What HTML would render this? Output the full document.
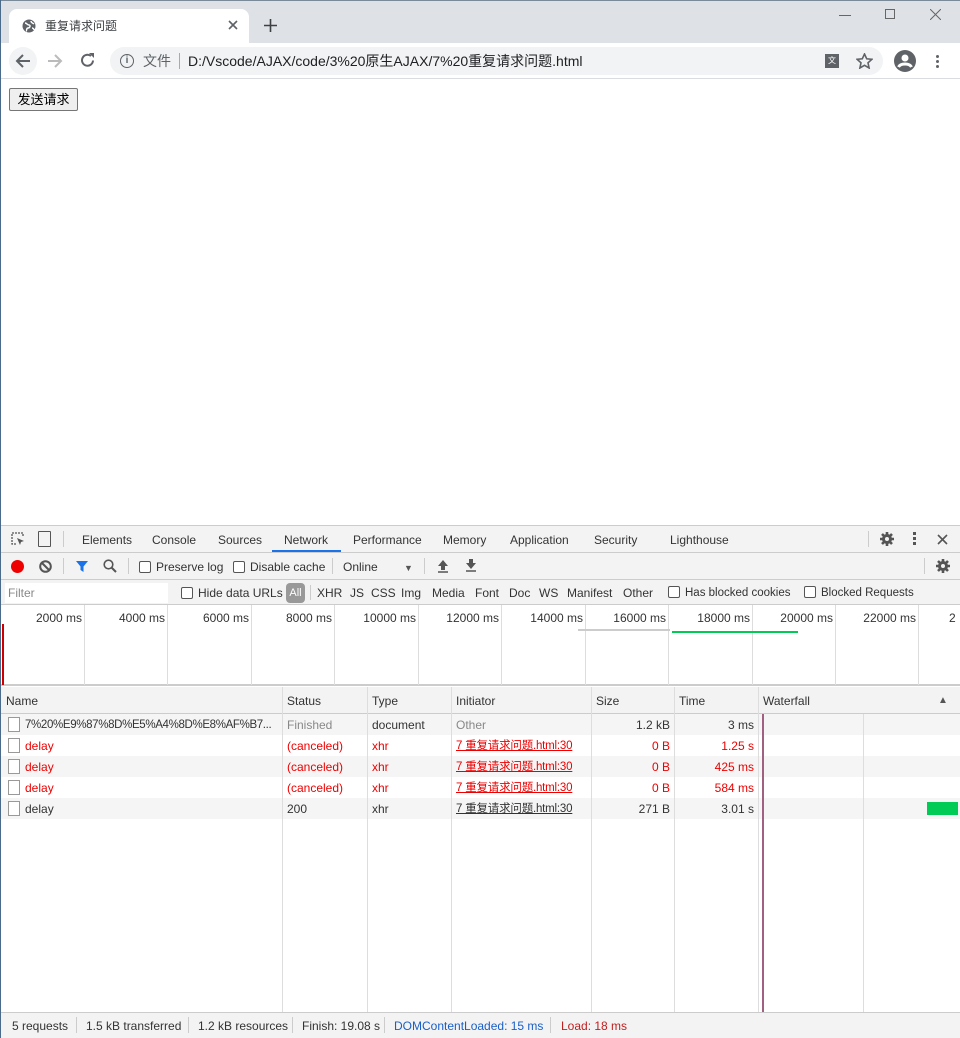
<!DOCTYPE html>
<html><head><meta charset="utf-8"><style>
*{margin:0;padding:0;box-sizing:border-box}
body{width:960px;height:1038px;position:relative;overflow:hidden;background:#fff;font-family:"Liberation Sans","Noto Sans CJK SC",sans-serif;font-size:12px;color:#333}
.a{position:absolute;white-space:nowrap;line-height:14px}
.t{font-size:12px;color:#333}
.red{color:#e00}
.vl{position:absolute;width:1px;background:#ddd}
.cb{display:inline-block;width:12px;height:12px;border:1px solid #555;border-radius:2px;vertical-align:-2px;margin-right:5px;background:#fff}
.ini{font-size:11.5px;text-decoration:underline;letter-spacing:-0.2px}
</style></head><body>
<div class="a" style="left:0;top:0;width:960px;height:1px;background:#7a8a99"></div>
<div class="a" style="left:0;top:0;width:1px;height:1038px;background:#4a6b8a"></div>
<div class="a" style="left:1px;top:1px;width:959px;height:42px;background:#dee1e6"></div>
<div class="a" style="left:9px;top:9px;width:240px;height:34px;background:#fff;border-radius:8px 8px 0 0"></div>
<svg class="a" style="left:22px;top:19px" width="14" height="14" viewBox="0 0 14 14"><circle cx="7" cy="7" r="6.5" fill="#5f6368"/><path d="M3 4c2 0 2 2 4 2s1 3-1 3-1 3-2 3M9 2c0 2 2 2 3 3M10 9c1 0 2 1 2 2" stroke="#fff" stroke-width="1.4" fill="none"/></svg>
<div class="a" style="left:45px;top:19px;font-size:12px;color:#3c4043">重复请求问题</div>
<svg class="a" style="left:228px;top:20px" width="10" height="10" viewBox="0 0 10 10"><path d="M1 1l8 8M9 1l-8 8" stroke="#5f6368" stroke-width="1.6"/></svg>
<svg class="a" style="left:264px;top:19px" width="13" height="13" viewBox="0 0 13 13"><path d="M6.5 0v13M0 6.5h13" stroke="#3c4043" stroke-width="1.6"/></svg>
<div class="a" style="left:839px;top:15px;width:12px;height:1px;background:#666"></div>
<div class="a" style="left:885px;top:9px;width:10px;height:10px;border:1px solid #666"></div>
<svg class="a" style="left:930px;top:9px" width="11" height="11" viewBox="0 0 11 11"><path d="M0 0l11 11M11 0L0 11" stroke="#666" stroke-width="1"/></svg>
<div class="a" style="left:1px;top:43px;width:959px;height:36px;background:#fff;border-bottom:1px solid #dadce0"></div>
<div class="a" style="left:9px;top:47px;width:28px;height:28px;border-radius:14px;background:#f1f3f4"></div>
<svg class="a" style="left:15px;top:53px" width="16" height="16" viewBox="0 0 16 16"><path d="M15 8H2M8 2L2 8l6 6" stroke="#5f6368" stroke-width="2" fill="none"/></svg>
<svg class="a" style="left:47px;top:53px" width="16" height="16" viewBox="0 0 16 16"><path d="M1 8h13M8 2l6 6-6 6" stroke="#bbb" stroke-width="2" fill="none"/></svg>
<svg class="a" style="left:79px;top:52px" width="17" height="17" viewBox="0 0 17 17"><path d="M14 8.5A5.5 5.5 0 1 1 12 4" stroke="#5f6368" stroke-width="2" fill="none"/><path d="M10 1h5v5z" fill="#5f6368"/></svg>
<div class="a" style="left:110px;top:47px;width:773px;height:28px;border-radius:14px;background:#f1f3f4"></div>
<div class="a" style="left:120px;top:54px;width:14px;height:14px;border:1.5px solid #5f6368;border-radius:7px;font-size:10px;text-align:center;line-height:11px;color:#5f6368;font-weight:bold">i</div>
<div class="a" style="left:143px;top:53px;font-size:14px;line-height:16px;color:#5f6368">文件</div>
<div class="a" style="left:179px;top:53px;width:1px;height:16px;background:#aaa"></div>
<div class="a" style="left:188px;top:53px;font-size:14px;line-height:16px;color:#202124">D:/Vscode/AJAX/code/3%20原生AJAX/7%20重复请求问题.html</div>
<div class="a" style="left:825px;top:54px;width:14px;height:14px;border:1px solid #5f6368;background:#5f6368;font-size:8px;color:#fff;text-align:center;line-height:12px">文</div>
<svg class="a" style="left:856px;top:53px" width="17" height="16" viewBox="0 0 17 16"><path d="M8.5 1l2.2 4.8 5.2.5-3.9 3.5 1.1 5.2-4.6-2.7-4.6 2.7 1.1-5.2L1.1 6.3l5.2-.5z" stroke="#5f6368" stroke-width="1.6" fill="none"/></svg>
<svg class="a" style="left:894px;top:50px" width="22" height="22" viewBox="0 0 22 22"><circle cx="11" cy="11" r="11" fill="#5f6368"/><circle cx="11" cy="8" r="3.5" fill="#fff"/><path d="M4.5 17c2-4 11-4 13 0" stroke="#fff" stroke-width="3" fill="none"/></svg>
<div class="a" style="left:936px;top:55px;width:3px;height:3px;background:#5f6368;border-radius:2px;box-shadow:0 5px 0 #5f6368,0 10px 0 #5f6368"></div>
<div class="a" style="left:9px;top:88px;width:69px;height:23px;border:1px solid #767676;background:#efefef;border-radius:2px;font-size:13px;color:#000;text-align:center;line-height:21px">发送请求</div>
<div class="a" style="left:1px;top:525px;width:959px;height:28px;background:#f3f3f3;border-top:1px solid #ccc;border-bottom:1px solid #ccc"></div>
<svg class="a" style="left:10px;top:531px" width="16" height="16" viewBox="0 0 16 16"><path d="M6 13H2V2h11v4" stroke="#555" stroke-width="1.3" fill="none" stroke-dasharray="2 1"/><path d="M7 7l7 3-3 1-1 3z" fill="#555"/></svg>
<div class="a" style="left:38px;top:531px;width:13px;height:16px;border:1.5px solid #555;border-radius:1px"></div>
<div class="a" style="left:63px;top:531px;width:1px;height:16px;background:#ccc"></div>
<div class="a t" style="left:82px;top:533px">Elements</div>
<div class="a t" style="left:152px;top:533px">Console</div>
<div class="a t" style="left:218px;top:533px">Sources</div>
<div class="a t" style="left:284px;top:533px">Network</div>
<div class="a" style="left:272px;top:550px;width:69px;height:2px;background:#1a73e8"></div>
<div class="a t" style="left:353px;top:533px">Performance</div>
<div class="a t" style="left:443px;top:533px">Memory</div>
<div class="a t" style="left:510px;top:533px">Application</div>
<div class="a t" style="left:594px;top:533px">Security</div>
<div class="a t" style="left:670px;top:533px">Lighthouse</div>
<div class="a" style="left:868px;top:531px;width:1px;height:16px;background:#ccc"></div>
<svg class="a" style="left:879px;top:531px" width="16" height="16" viewBox="0 0 16 16"><circle cx="8" cy="8" r="5" fill="#555"/><path d="M8 1v14M1 8h14M3 3l10 10M13 3L3 13" stroke="#555" stroke-width="2.6"/><circle cx="8" cy="8" r="2" fill="#f3f3f3"/></svg>
<div class="a" style="left:913px;top:532px;width:3px;height:3px;background:#555;box-shadow:0 5px 0 #555,0 10px 0 #555"></div>
<svg class="a" style="left:937px;top:534px" width="11" height="11" viewBox="0 0 11 11"><path d="M1 1l9 9M10 1l-9 9" stroke="#555" stroke-width="1.6"/></svg>
<div class="a" style="left:1px;top:553px;width:959px;height:27px;background:#f3f3f3;border-bottom:1px solid #ccc"></div>
<div class="a" style="left:11px;top:560px;width:13px;height:13px;border-radius:7px;background:#e00"></div>
<svg class="a" style="left:39px;top:560px" width="13" height="13" viewBox="0 0 13 13"><circle cx="6.5" cy="6.5" r="5.3" stroke="#555" stroke-width="2" fill="none"/><path d="M3 3l7 7" stroke="#555" stroke-width="2"/></svg>
<div class="a" style="left:63px;top:558px;width:1px;height:16px;background:#ccc"></div>
<svg class="a" style="left:75px;top:560px" width="14" height="13" viewBox="0 0 14 13"><path d="M1 1h12L8.5 6.5V12L5.5 10V6.5z" fill="#1a73e8"/></svg>
<svg class="a" style="left:103px;top:559px" width="14" height="14" viewBox="0 0 14 14"><circle cx="5.5" cy="5.5" r="4.3" stroke="#555" stroke-width="1.6" fill="none"/><path d="M8.5 8.5l4.5 4.5" stroke="#555" stroke-width="2"/></svg>
<div class="a" style="left:128px;top:558px;width:1px;height:16px;background:#ccc"></div>
<div class="a t" style="left:139px;top:560px"><span class="cb"></span>Preserve log</div>
<div class="a t" style="left:233px;top:560px"><span class="cb"></span>Disable cache</div>
<div class="a" style="left:332px;top:558px;width:1px;height:16px;background:#ccc"></div>
<div class="a t" style="left:343px;top:560px">Online</div>
<div class="a" style="left:404px;top:561px;font-size:9px;color:#555">▼</div>
<div class="a" style="left:424px;top:558px;width:1px;height:16px;background:#ccc"></div>
<svg class="a" style="left:437px;top:560px" width="12" height="13" viewBox="0 0 12 13"><path d="M6 0l5 6H8v4H4V6H1z" fill="#555"/><path d="M1 12h10" stroke="#555" stroke-width="1.5"/></svg>
<svg class="a" style="left:465px;top:559px" width="12" height="13" viewBox="0 0 12 13"><path d="M6 10l5-6H8V0H4v4H1z" fill="#555"/><path d="M1 12h10" stroke="#555" stroke-width="1.5"/></svg>
<div class="a" style="left:924px;top:558px;width:1px;height:16px;background:#ccc"></div>
<svg class="a" style="left:935px;top:558px" width="16" height="16" viewBox="0 0 16 16"><circle cx="8" cy="8" r="5" fill="#555"/><path d="M8 1v14M1 8h14M3 3l10 10M13 3L3 13" stroke="#555" stroke-width="2.6"/><circle cx="8" cy="8" r="2" fill="#f3f3f3"/></svg>
<div class="a" style="left:1px;top:580px;width:959px;height:25px;background:#f3f3f3;border-bottom:1px solid #ccc"></div>
<div class="a" style="left:5px;top:583px;width:163px;height:20px;background:#fff;color:#888;padding:3px 3px;font-size:12px">Filter</div>
<div class="a t" style="left:181px;top:586px"><span class="cb"></span>Hide data URLs</div>
<div class="a" style="left:286px;top:583px;width:19px;height:20px;border-radius:4px;background:#999;color:#fff;font-size:11px;text-align:center;line-height:20px">All</div>
<div class="a" style="left:310px;top:585px;width:1px;height:15px;background:#ccc"></div>
<div class="a t" style="left:317px;top:586px">XHR</div>
<div class="a t" style="left:350px;top:586px">JS</div>
<div class="a t" style="left:371px;top:586px">CSS</div>
<div class="a t" style="left:401px;top:586px">Img</div>
<div class="a t" style="left:432px;top:586px">Media</div>
<div class="a t" style="left:475px;top:586px">Font</div>
<div class="a t" style="left:509px;top:586px">Doc</div>
<div class="a t" style="left:539px;top:586px">WS</div>
<div class="a t" style="left:567px;top:586px">Manifest</div>
<div class="a t" style="left:623px;top:586px">Other</div>
<div class="a t" style="left:668px;top:586px;font-size:11.5px"><span class="cb"></span>Has blocked cookies</div>
<div class="a t" style="left:804px;top:586px;font-size:11.5px"><span class="cb"></span>Blocked Requests</div>
<div class="a" style="left:1px;top:605px;width:959px;height:81px;background:#fff;border-bottom:2px solid #ccc"></div>
<div class="vl" style="left:84px;top:605px;height:80px"></div><div class="vl" style="left:167px;top:605px;height:80px"></div><div class="vl" style="left:251px;top:605px;height:80px"></div><div class="vl" style="left:334px;top:605px;height:80px"></div><div class="vl" style="left:418px;top:605px;height:80px"></div><div class="vl" style="left:501px;top:605px;height:80px"></div><div class="vl" style="left:585px;top:605px;height:80px"></div><div class="vl" style="left:668px;top:605px;height:80px"></div><div class="vl" style="left:752px;top:605px;height:80px"></div><div class="vl" style="left:835px;top:605px;height:80px"></div><div class="vl" style="left:918px;top:605px;height:80px"></div>
<div class="a t" style="right:878px;top:611px">2000 ms</div>
<div class="a t" style="right:795px;top:611px">4000 ms</div>
<div class="a t" style="right:711px;top:611px">6000 ms</div>
<div class="a t" style="right:628px;top:611px">8000 ms</div>
<div class="a t" style="right:544px;top:611px">10000 ms</div>
<div class="a t" style="right:461px;top:611px">12000 ms</div>
<div class="a t" style="right:377px;top:611px">14000 ms</div>
<div class="a t" style="right:294px;top:611px">16000 ms</div>
<div class="a t" style="right:210px;top:611px">18000 ms</div>
<div class="a t" style="right:127px;top:611px">20000 ms</div>
<div class="a t" style="right:44px;top:611px">22000 ms</div>
<div class="a t" style="left:949px;top:611px">2</div>
<div class="a" style="left:2px;top:624px;width:2px;height:61px;background:#c00"></div>
<div class="a" style="left:578px;top:629px;width:92px;height:2px;background:#ccc"></div>
<div class="a" style="left:672px;top:631px;width:126px;height:2px;background:#0c5"></div>
<div class="a" style="left:1px;top:687px;width:959px;height:27px;background:#f3f3f3;border-bottom:1px solid #ccc"></div>
<div class="a" style="left:1px;top:714px;width:959px;height:21px;background:#f5f5f5"></div>
<div class="a" style="left:1px;top:756px;width:959px;height:21px;background:#f5f5f5"></div>
<div class="a" style="left:1px;top:798px;width:959px;height:21px;background:#f5f5f5"></div>
<div class="vl" style="left:282px;top:687px;height:325px"></div>
<div class="vl" style="left:367px;top:687px;height:325px"></div>
<div class="vl" style="left:451px;top:687px;height:325px"></div>
<div class="vl" style="left:591px;top:687px;height:325px"></div>
<div class="vl" style="left:674px;top:687px;height:325px"></div>
<div class="vl" style="left:758px;top:687px;height:325px"></div>
<div class="vl" style="left:863px;top:714px;height:298px"></div>
<div class="a" style="left:762px;top:714px;width:2px;height:298px;background:#a06080"></div>
<div class="a t" style="left:6px;top:694px">Name</div>
<div class="a t" style="left:287px;top:694px">Status</div>
<div class="a t" style="left:372px;top:694px">Type</div>
<div class="a t" style="left:456px;top:694px">Initiator</div>
<div class="a t" style="left:596px;top:694px">Size</div>
<div class="a t" style="left:679px;top:694px">Time</div>
<div class="a t" style="left:763px;top:694px">Waterfall</div>
<div class="a" style="left:938px;top:694px;font-size:10px;color:#555">▲</div>

<div class="a" style="left:8px;top:717px;width:12px;height:15px;border:1px solid #999;background:#fff"></div>
<div class="a t" style="left:25px;top:718px;font-size:11.5px;letter-spacing:-0.35px">7%20%E9%87%8D%E5%A4%8D%E8%AF%B7...</div>
<div class="a" style="left:287px;top:718px;color:#888">Finished</div>
<div class="a t" style="left:372px;top:718px">document</div>
<div class="a" style="left:456px;top:718px;color:#888">Other</div>
<div class="a t" style="right:290px;top:718px">1.2 kB</div>
<div class="a t" style="right:206px;top:718px">3 ms</div>

<div class="a" style="left:8px;top:738px;width:12px;height:15px;border:1px solid #999;background:#fff"></div>
<div class="a red" style="left:25px;top:739px">delay</div>
<div class="a red" style="left:287px;top:739px">(canceled)</div>
<div class="a red" style="left:372px;top:739px">xhr</div>
<div class="a red ini" style="left:456px;top:739px">7 重复请求问题.html:30</div>
<div class="a red" style="right:290px;top:739px">0 B</div>
<div class="a red" style="right:206px;top:739px">1.25 s</div>

<div class="a" style="left:8px;top:759px;width:12px;height:15px;border:1px solid #999;background:#fff"></div>
<div class="a red" style="left:25px;top:760px">delay</div>
<div class="a red" style="left:287px;top:760px">(canceled)</div>
<div class="a red" style="left:372px;top:760px">xhr</div>
<div class="a red ini" style="left:456px;top:760px">7 重复请求问题.html:30</div>
<div class="a red" style="right:290px;top:760px">0 B</div>
<div class="a red" style="right:206px;top:760px">425 ms</div>

<div class="a" style="left:8px;top:780px;width:12px;height:15px;border:1px solid #999;background:#fff"></div>
<div class="a red" style="left:25px;top:781px">delay</div>
<div class="a red" style="left:287px;top:781px">(canceled)</div>
<div class="a red" style="left:372px;top:781px">xhr</div>
<div class="a red ini" style="left:456px;top:781px">7 重复请求问题.html:30</div>
<div class="a red" style="right:290px;top:781px">0 B</div>
<div class="a red" style="right:206px;top:781px">584 ms</div>

<div class="a" style="left:8px;top:801px;width:12px;height:15px;border:1px solid #999;background:#fff"></div>
<div class="a t" style="left:25px;top:802px">delay</div>
<div class="a t" style="left:287px;top:802px">200</div>
<div class="a t" style="left:372px;top:802px">xhr</div>
<div class="a t ini" style="left:456px;top:802px">7 重复请求问题.html:30</div>
<div class="a t" style="right:290px;top:802px">271 B</div>
<div class="a t" style="right:206px;top:802px">3.01 s</div>
<div class="a" style="left:927px;top:802px;width:31px;height:13px;background:#0c5"></div>

<div class="a" style="left:1px;top:1012px;width:959px;height:26px;background:#f3f3f3;border-top:1px solid #ccc"></div>
<div class="a t" style="left:12px;top:1019px">5 requests</div>
<div class="a" style="left:76px;top:1017px;width:1px;height:16px;background:#ccc"></div>
<div class="a t" style="left:86px;top:1019px">1.5 kB transferred</div>
<div class="a" style="left:188px;top:1017px;width:1px;height:16px;background:#ccc"></div>
<div class="a t" style="left:198px;top:1019px">1.2 kB resources</div>
<div class="a" style="left:292px;top:1017px;width:1px;height:16px;background:#ccc"></div>
<div class="a t" style="left:302px;top:1019px">Finish: 19.08 s</div>
<div class="a" style="left:384px;top:1017px;width:1px;height:16px;background:#ccc"></div>
<div class="a" style="left:394px;top:1019px;color:#1a5fc8">DOMContentLoaded: 15 ms</div>
<div class="a" style="left:550px;top:1017px;width:1px;height:16px;background:#ccc"></div>
<div class="a" style="left:561px;top:1019px;color:#c02020">Load: 18 ms</div>
</body></html>
